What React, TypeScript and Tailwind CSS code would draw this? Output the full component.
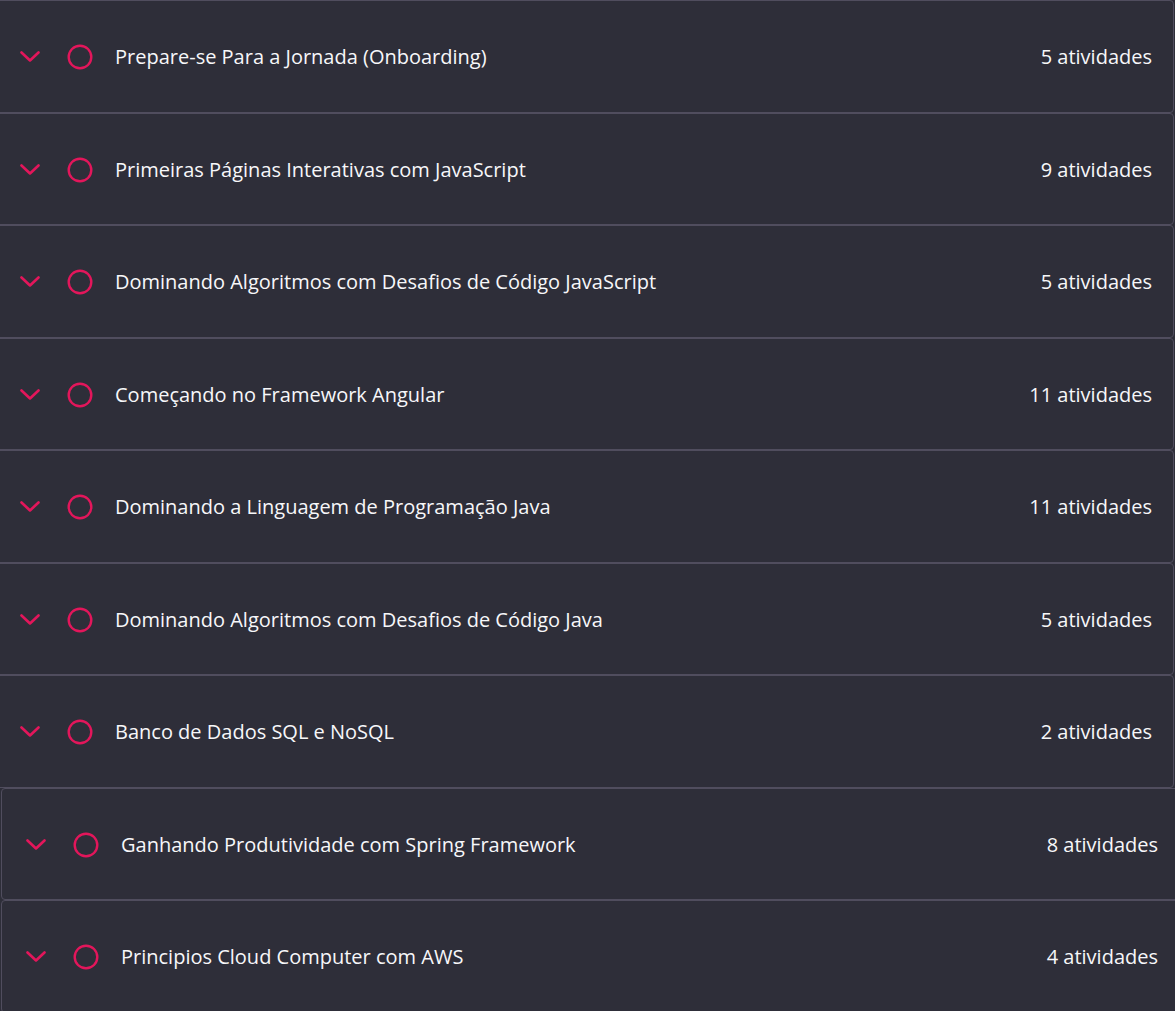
import React from 'react';

type Module = { title: string; count: number };

const modules: Module[] = [
  { title: 'Prepare-se Para a Jornada (Onboarding)', count: 5 },
  { title: 'Primeiras Páginas Interativas com JavaScript', count: 9 },
  { title: 'Dominando Algoritmos com Desafios de Código JavaScript', count: 5 },
  { title: 'Começando no Framework Angular', count: 11 },
  { title: 'Dominando a Linguagem de Programação Java', count: 11 },
  { title: 'Dominando Algoritmos com Desafios de Código Java', count: 5 },
  { title: 'Banco de Dados SQL e NoSQL', count: 2 },
  { title: 'Ganhando Produtividade com Spring Framework', count: 8 },
  { title: 'Principios Cloud Computer com AWS', count: 4 },
];

function Chevron() {
  return (
    <svg width="20" height="12" viewBox="0 0 20 12" fill="none" className="shrink-0">
      <polyline
        points="1.5,1.5 10,9.5 18.5,1.5"
        stroke="#e3165b"
        strokeWidth="2.6"
        strokeLinecap="round"
        strokeLinejoin="round"
      />
    </svg>
  );
}

function Ring() {
  return (
    <svg width="26" height="26" viewBox="0 0 26 26" fill="none" className="shrink-0">
      <circle cx="13" cy="13" r="11.3" stroke="#e3165b" strokeWidth="2.4" />
    </svg>
  );
}

// module row

function ModuleRow({ title, count, shifted }: Module & { shifted: boolean }) {
  return (
    <div
      className={`flex h-[112.5px] w-[1179px] shrink-0 items-center rounded-[4px] border border-[#504d5e] bg-[#2e2e39] pl-[24px] pr-[21px] pt-[2px] ${
        shifted ? 'ml-px' : 'ml-[-5px]'
      }`}
    >
      <Chevron />
      <div className="ml-[27px]">
        <Ring />
      </div>
      <h3 className="ml-[22px] flex-1 text-[20px] leading-7 text-[#f7f7f9]">
        {title}
      </h3>
      <p className="text-[20px] leading-7 text-[#f7f7f9]">{count} atividades</p>
    </div>
  );
}

export default function App() {
  return (
    <div
      className="flex h-[1011px] w-[1175px] flex-col overflow-hidden bg-[#2e2e39]"
      style={{ fontFamily: '"Open Sans", "Noto Sans", sans-serif' }}
    >
      {modules.map((m, i) => (
        <ModuleRow key={m.title} {...m} shifted={i >= 7} />
      ))}
    </div>
  );
}
